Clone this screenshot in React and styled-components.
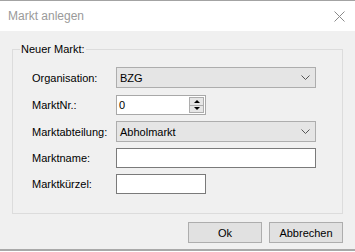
import React from 'react'
import styled, { createGlobalStyle } from 'styled-components'

const GlobalStyle = createGlobalStyle`
  html, body {
    margin: 0;
    padding: 0;
    background: #ffffff;
  }
  body {
    font-family: "Liberation Sans", Arial, sans-serif;
    font-size: 11px;
  }
`

const Dialog = styled.div`
  display: flex;
  flex-direction: column;
  width: 355px;
  height: 251px;
  box-sizing: border-box;
  border-top: 1px solid #a3a3a3;
  border-bottom: 2px solid #a9a9a9;
  background: #f0f0f0;
`

const TitleBar = styled.div`
  display: flex;
  align-items: center;
  justify-content: space-between;
  height: 30px;
  padding: 0 10px 0 8px;
  background: #ffffff;
  flex-shrink: 0;
`

const Title = styled.span`
  font-size: 12px;
  color: #9a9a9a;
`

const Body = styled.div`
  display: flex;
  flex-direction: column;
  padding: 11px 12px 0 12px;
`

const Group = styled.fieldset`
  margin: 0;
  padding: 11px 19px 19px 19px;
  border: 1px solid #dcdcdc;
`

const GroupTitle = styled.legend`
  margin-left: -12px;
  padding: 0 1px;
  line-height: 14px;
  color: #000;
`

const Form = styled.div`
  display: grid;
  grid-template-columns: 84px 1fr;
  grid-template-rows: 28px 26px 27px 26px 20px;
  align-items: start;
`

const Label = styled.label`
  display: flex;
  align-items: center;
  height: ${p => p.$h || 20}px;
  color: #000;
`

const Combo = styled.div`
  display: flex;
  align-items: center;
  justify-content: space-between;
  box-sizing: border-box;
  width: 200px;
  height: 21px;
  padding: 0 5px 0 3px;
  background: #e5e5e5;
  border: 1px solid #adadad;
  color: #000;
`

const TextBox = styled.div`
  display: flex;
  align-items: center;
  box-sizing: border-box;
  width: ${p => p.$w}px;
  height: 20px;
  padding: 0 2px;
  background: #ffffff;
  border: 1px solid #7a7a7a;
  color: #000;
`

const Spinner = styled.div`
  display: flex;
  align-items: center;
  justify-content: space-between;
  box-sizing: border-box;
  width: 90px;
  height: 20px;
  padding: 0 1px 0 2px;
  background: #ffffff;
  border: 1px solid #a8a8a8;
`

const SpinButtons = styled.div`
  display: flex;
  flex-direction: column;
  width: 15px;
  height: 16px;
  border: 1px solid #adadad;
  box-sizing: border-box;
  background: #e6e6e6;
`

const SpinButton = styled.div`
  flex: 1;
  display: flex;
  align-items: center;
  justify-content: center;
  border-top: ${p => (p.$down ? '1px solid #adadad' : 'none')};

  &::after {
    content: '';
    width: 0;
    height: 0;
    border-left: 3px solid transparent;
    border-right: 3px solid transparent;
    ${p => (p.$down ? 'border-top: 3px solid #000;' : 'border-bottom: 3px solid #000;')}
  }
`

const Buttons = styled.div`
  display: flex;
  justify-content: flex-end;
  gap: 7px;
  margin-top: 8px;
`

const Button = styled.div`
  display: flex;
  align-items: center;
  justify-content: center;
  box-sizing: border-box;
  width: 74px;
  height: 21px;
  background: #e1e1e1;
  border: 1px solid #adadad;
  color: #000;
`

const Chevron = () => (
  <svg width="9" height="5" viewBox="0 0 9 5">
    <polyline points="0.5,0.5 4.5,4.5 8.5,0.5" fill="none" stroke="#555" strokeWidth="1" />
  </svg>
)

const CloseIcon = () => (
  <svg width="11" height="11" viewBox="0 0 11 11">
    <path d="M0.5 0.5 L10.5 10.5 M10.5 0.5 L0.5 10.5" stroke="#8a8a8a" strokeWidth="1" />
  </svg>
)

const App = () => {
  return (
    <>
      <GlobalStyle />
      <Dialog>
        <TitleBar>
          <Title>Markt anlegen</Title>
          <CloseIcon />
        </TitleBar>
        <Body>
          <Group>
            <GroupTitle>Neuer Markt:</GroupTitle>
            <Form>
              <Label $h={21}>Organisation:</Label>
              <Combo>
                <span>BZG</span>
                <Chevron />
              </Combo>

              <Label>MarktNr.:</Label>
              <Spinner>
                <span>0</span>
                <SpinButtons>
                  <SpinButton />
                  <SpinButton $down />
                </SpinButtons>
              </Spinner>

              <Label $h={21}>Marktabteilung:</Label>
              <Combo>
                <span>Abholmarkt</span>
                <Chevron />
              </Combo>

              <Label>Marktname:</Label>
              <TextBox $w={200} />

              <Label>Marktkürzel:</Label>
              <TextBox $w={90} />
            </Form>
          </Group>
          <Buttons>
            <Button>Ok</Button>
            <Button>Abbrechen</Button>
          </Buttons>
        </Body>
      </Dialog>
    </>
  )
}

export default App
